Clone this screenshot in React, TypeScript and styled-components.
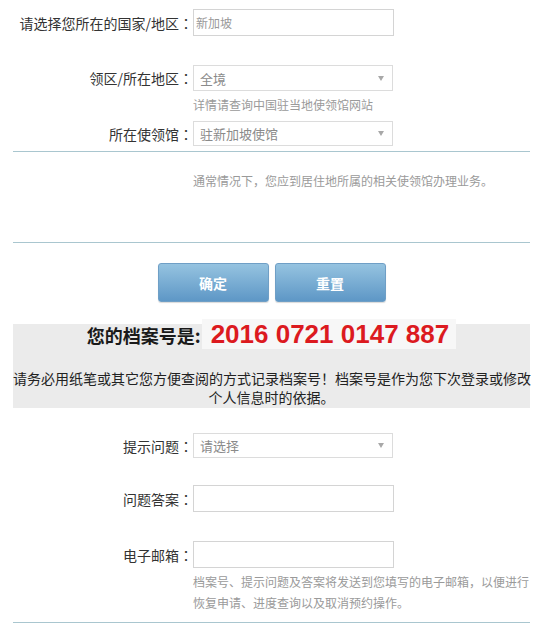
import React from "react";
import styled, { createGlobalStyle } from "styled-components";

const GlobalStyle = createGlobalStyle`
  body {
    margin: 0;
    background: #fff;
    font-family: "Noto Sans CJK SC", "Liberation Sans", sans-serif;
    color: #333;
  }
`;

function FieldLabel({ text }: { text: string }) {
  return (
    <Label>
      {text}
      <Colon>：</Colon>
    </Label>
  );
}

export default function App() {
  return (
    <>
      <GlobalStyle />
      <Page>
        <FormRow $top={0}>
          <FieldLabel text='请选择您所在的国家/地区' />
          <TextInput readOnly value='新加坡' />
        </FormRow>
        <FormRow $top={29}>
          <FieldLabel text='领区/所在地区' />
          <SelectBox $h={26}>
            <span>全境</span>
            <Caret />
          </SelectBox>
        </FormRow>
        <Hint $top={4} $lh={20}>详情请查询中国驻当地使领馆网站</Hint>
        <FormRow $top={6}>
          <FieldLabel text='所在使领馆' />
          <SelectBox $h={25}>
            <span>驻新加坡使馆</span>
            <Caret />
          </SelectBox>
        </FormRow>
        <Divider $top={5} />

        <Note>通常情况下，您应到居住地所属的相关使领馆办理业务。</Note>
        <Divider $top={0} />

        <ButtonBar>
          <Button type='button'>确定</Button>
          <Button type='button'>重置</Button>
        </ButtonBar>

        <NoticeBox>
          <Title>
            您的档案号是:<Number>2016 0721 0147 887</Number>
          </Title>
          <NoticeText>
            请务必用纸笔或其它您方便查阅的方式记录档案号！档案号是作为您下次登录或修改
            <br />
            个人信息时的依据。
          </NoticeText>
        </NoticeBox>

        <FormRow $top={25}>
          <FieldLabel text='提示问题' />
          <SelectBox $h={25}>
            <span>请选择</span>
            <Caret />
          </SelectBox>
        </FormRow>
        <FormRow $top={27}>
          <FieldLabel text='问题答案' />
          <TextInput />
        </FormRow>
        <FormRow $top={29}>
          <FieldLabel text='电子邮箱' />
          <TextInput />
        </FormRow>
        <Hint $top={3} $lh={21}>
          档案号、提示问题及答案将发送到您填写的电子邮箱，以便进行
          <br />
          恢复申请、进度查询以及取消预约操作。
        </Hint>
        <Divider $top={9} />
      </Page>
    </>
  );
}

const Page = styled.div`
  width: 517px;
  padding: 9px 12px 0 13px;
`;

const FormRow = styled.div<{ $top: number }>`
  display: flex;
  align-items: center;
  margin-top: ${(p) => p.$top}px;
`;

const Label = styled.label`
  width: 180px;
  flex: none;
  text-align: right;
  font-size: 14px;
  color: #333;
  white-space: nowrap;
`;

const Colon = styled.span`
  font-family: "Noto Sans CJK TC", sans-serif;
`;

const TextInput = styled.input`
  box-sizing: border-box;
  width: 201px;
  height: 27px;
  margin: 0;
  padding: 0 2px;
  border: 1px solid #d4d4d4;
  border-radius: 0;
  outline: none;
  font-family: "Noto Sans CJK SC", sans-serif;
  font-size: 12px;
  color: #999;
  background: #fff;
`;

const SelectBox = styled.div<{ $h: number }>`
  box-sizing: border-box;
  width: 200px;
  height: ${(p) => p.$h}px;
  display: flex;
  align-items: center;
  justify-content: space-between;
  padding: 0 8px 0 6px;
  border: 1px solid #dcdcdc;
  font-size: 13px;
  color: #8a8a8a;
`;

const Caret = styled.span`
  width: 0;
  height: 0;
  border-left: 3px solid transparent;
  border-right: 3px solid transparent;
  border-top: 5px solid #a8a8a8;
`;

const Hint = styled.div<{ $top: number; $lh: number }>`
  margin: ${(p) => p.$top}px 0 0 180px;
  font-size: 12px;
  line-height: ${(p) => p.$lh}px;
  color: #9a9a9a;
  white-space: nowrap;
`;

const Divider = styled.div<{ $top: number }>`
  height: 1px;
  margin-top: ${(p) => p.$top}px;
  background: #a9c6cf;
`;

const Note = styled.div`
  padding: 19px 0 51px 180px;
  font-size: 12px;
  line-height: 20px;
  color: #9a9a9a;
`;

const ButtonBar = styled.div`
  display: flex;
  justify-content: center;
  gap: 6px;
  margin-top: 20px;
`;

const Button = styled.button`
  width: 111px;
  height: 39px;
  border: 1px solid #6f9fc6;
  border-radius: 3px;
  background: linear-gradient(#95c3e0, #5e97c6);
  box-shadow: 0 1px 1px rgba(0, 0, 0, 0.15);
  font-family: "Noto Sans CJK SC", sans-serif;
  font-size: 14px;
  font-weight: bold;
  color: #fff;
  cursor: pointer;
`;

const NoticeBox = styled.div`
  margin-top: 22px;
  padding-bottom: 1px;
  background: #ebebeb;
  text-align: center;
`;

const Title = styled.div`
  font-size: 18px;
  font-weight: bold;
  line-height: 20px;
  color: #1a1a1a;
`;

const Number = styled.span`
  margin-left: 1px;
  padding: 0 7px 0 9px;
  background: #f7f7f7;
  font-family: "Liberation Sans", Arial, sans-serif;
  font-size: 26px;
  font-weight: bold;
  color: #dc1a1f;
`;

const NoticeText = styled.p`
  margin: 24px 0 0;
  font-size: 14px;
  line-height: 19px;
  color: #222;
  white-space: nowrap;
`;
